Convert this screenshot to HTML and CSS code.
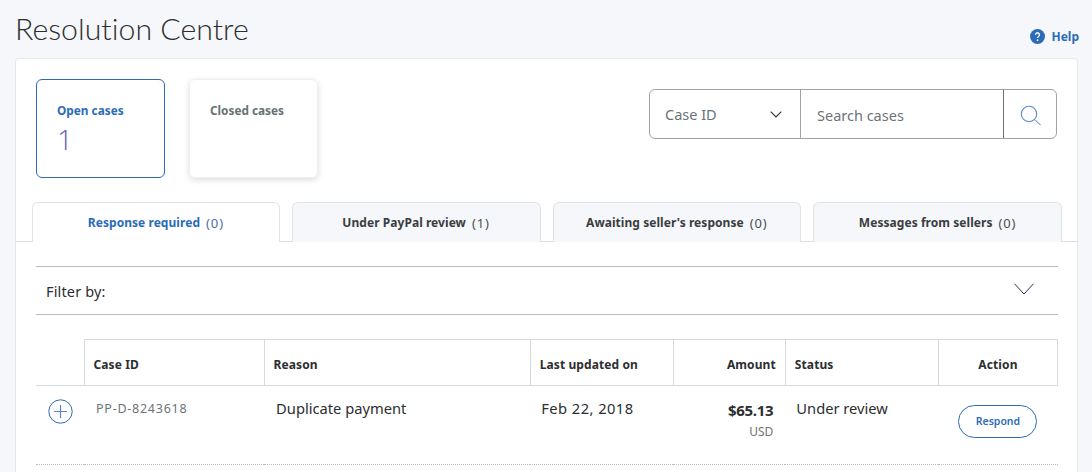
FILE: index.html
```html
<!DOCTYPE html>
<html lang="en">
<head>
<meta charset="utf-8">
<title>Resolution Centre</title>
<link rel="stylesheet" href="styles.css">
</head>
<body>
<div class="page">
  <header class="page-head">
    <h1 class="title">Resolution Centre</h1>
    <a class="help" href="#">
      <svg class="help-icon" width="15" height="15" viewBox="0 0 16 16" aria-hidden="true"><circle cx="8" cy="8" r="8" fill="#2c6bb8"/><path d="M5.9 6.2a2.1 2.1 0 1 1 3.2 1.8c-.7.4-1.1.8-1.1 1.6" fill="none" stroke="#fff" stroke-width="1.5"/><circle cx="8" cy="11.9" r=".95" fill="#fff"/></svg>
      <span>Help</span>
    </a>
  </header>
  <main class="panel">
    <section class="top">
      <div class="cards">
        <div class="card card-active">
          <div class="card-label">Open cases</div>
          <div class="card-count">1</div>
        </div>
        <div class="card">
          <div class="card-label">Closed cases</div>
        </div>
      </div>
      <div class="search">
        <div class="search-type">
          <span>Case ID</span>
          <svg width="12" height="7" viewBox="0 0 12 7" aria-hidden="true"><path d="M.7.7 6 6l5.3-5.3" fill="none" stroke="#2c2e2f" stroke-width="1.1"/></svg>
        </div>
        <div class="search-input">Search cases</div>
        <div class="search-btn">
          <svg width="24" height="24" viewBox="0 0 24 24" aria-hidden="true"><circle cx="10" cy="10" r="7.7" fill="none" stroke="#5b86cc" stroke-width="1.1"/><path d="m15.6 15.6 6 5.6" fill="none" stroke="#7f9fce" stroke-width="1.1"/></svg>
        </div>
      </div>
    </section>
    <nav class="tabs">
      <div class="tab tab-active"><b>Response required</b><span class="num">(0)</span></div>
      <div class="tab"><b>Under PayPal review</b><span class="num">(1)</span></div>
      <div class="tab"><b>Awaiting seller's response</b><span class="num">(0)</span></div>
      <div class="tab"><b>Messages from sellers</b><span class="num">(0)</span></div>
    </nav>
    <section class="body">
      <div class="filter">
        <span>Filter by:</span>
        <svg width="20" height="12" viewBox="0 0 20 12" aria-hidden="true"><path d="M.4.7 10 11 19.6.7" fill="none" stroke="#2a2a50" stroke-width="1"/></svg>
      </div>
      <table class="cases">
        <colgroup>
          <col class="c0"><col class="c1"><col class="c2"><col class="c3"><col class="c4"><col class="c5"><col class="c6">
        </colgroup>
        <thead>
          <tr>
            <th class="blank"></th>
            <th>Case ID</th>
            <th>Reason</th>
            <th>Last updated on</th>
            <th class="right">Amount</th>
            <th>Status</th>
            <th class="center">Action</th>
          </tr>
        </thead>
        <tbody>
          <tr>
            <td class="expand">
              <svg width="25" height="25" viewBox="0 0 25 25" aria-hidden="true"><circle cx="12.5" cy="12.5" r="11.7" fill="none" stroke="#2c6bb8" stroke-width="1"/><path d="M12.5 6v13M6 12.5h13" fill="none" stroke="#5b86cc" stroke-width="1.2"/></svg>
            </td>
            <td class="case-id">PP-D-8243618</td>
            <td class="text reason">Duplicate payment</td>
            <td class="text date">Feb 22, 2018</td>
            <td class="amount"><div class="value">$65.13</div><div class="cur">USD</div></td>
            <td class="text">Under review</td>
            <td class="action"><a class="respond" href="#">Respond</a></td>
          </tr>
        </tbody>
      </table>
    </section>
  </main>
</div>
</body>
</html>
```
FILE: styles.css
```css
* { box-sizing: border-box; }
html, body { margin: 0; height: 100%; overflow: hidden; }
body {
  background: #f5f7fa;
  color: #2c2e2f;
  font-family: "Noto Sans", "Open Sans", sans-serif;
}
.page { padding: 0 14px 0 15px; }
.page-head {
  height: 58px;
  display: flex;
  justify-content: space-between;
}
.title {
  margin: 9px 0 0 0;
  font-family: Lato, sans-serif;
  font-weight: 300;
  font-size: 30.3px;
  line-height: 38px;
  font-variant-ligatures: none;
  color: #2c2e2f;
}
.help {
  display: flex;
  align-items: center;
  gap: 6px;
  height: 16px;
  margin: 28px -1px 0 0;
  color: #2c6bb8;
  font-size: 12px;
  font-weight: 700;
  text-decoration: none;
}
.panel {
  background: #fff;
  border: 1px solid #e5e8ee;
  border-radius: 4px 4px 0 0;
  height: 420px;
}
.top {
  display: flex;
  justify-content: space-between;
  padding: 20px 20px 0 20px;
  height: 143px;
}
.cards { display: flex; gap: 24px; }
.card {
  width: 129px;
  height: 99px;
  border: 1px solid #eef0f3;
  border-radius: 6px;
  padding: 22px 19px 0 20px;
  box-shadow: 0 2px 6px rgba(0,0,0,.14);
  color: #687173;
}
.card-active {
  border-color: #2c6bb8;
  color: #2c6bb8;
  box-shadow: none;
}
.card-label { font-size: 11.8px; font-weight: 700; line-height: 16px; }
.card-count {
  font-family: "Open Sans", sans-serif;
  font-weight: 300;
  font-size: 28px;
  line-height: 34px;
  margin-top: 4px;
  color: #5f5fb8;
}
.search {
  margin-top: 10px;
  width: 408px;
  height: 50px;
  border: 1px solid #9da3a6;
  border-radius: 6px;
  display: flex;
  color: #6c7378;
  font-size: 14.5px;
}
.search-type {
  width: 151px;
  border-right: 1px solid #9da3a6;
  display: flex;
  align-items: center;
  justify-content: space-between;
  padding: 0 18px 0 15px;
}
.search-input {
  flex: 1;
  display: flex;
  align-items: center;
  padding: 2px 16px 0;
  border-right: 1px solid #6c7378;
}
.search-btn {
  width: 52px;
  display: flex;
  align-items: center;
  justify-content: center;
  padding: 4px 0 0 2px;
}
.tabs {
  display: flex;
  gap: 12px;
  padding-left: 16px;
  margin-right: 15px;
  height: 40px;
}
.tab {
  width: 249px;
  border: 1px solid #dfe3e8;
  border-bottom: 0;
  border-radius: 6px 6px 0 0;
  background: #f5f7fa;
  display: flex;
  align-items: center;
  justify-content: center;
  gap: 6px;
  font-size: 12px;
}
.tab b { font-weight: 700; color: #3a3d3f; letter-spacing: .05px; }
.tab .num { color: #4a4f52; font-size: 13px; letter-spacing: .9px; }
.tab-active { width: 248px; background: #fff; position: relative; z-index: 1; }
.tab-active b { color: #2c6bb8; }
.tab-active .num { color: #4c6fa8; }
.body {
  border-top: 1px solid #dcdfe4;
  margin-top: -1px;
  padding: 24px 19px 0 20px;
}
.filter {
  height: 49px;
  border-top: 1px solid #b9bdc0;
  border-bottom: 1px solid #b9bdc0;
  display: flex;
  align-items: center;
  justify-content: space-between;
  padding: 1px 24px 0 10px;
  font-size: 14.5px;
  letter-spacing: .15px;
  color: #2c2e2f;
}
.filter svg { margin-top: -5px; }
.cases {
  margin-top: 24px;
  width: 1022px;
  border-collapse: collapse;
  table-layout: fixed;
}
.c0 { width: 48px; }
.c1 { width: 180px; }
.c2 { width: 266px; }
.c3 { width: 143px; }
.c4 { width: 112px; }
.c5 { width: 153px; }
.c6 { width: 119px; }
.cases th {
  height: 46px;
  border: 1px solid #d5dadd;
  padding: 4px 9px 0;
  font-size: 12px;
  font-weight: 700;
  letter-spacing: .1px;
  text-align: left;
  color: #2c2e2f;
}
.cases th.blank { border-top: 0; border-left: 0; }
.cases th.right { text-align: right; }
.cases th.center { text-align: center; }
.cases td {
  height: 79px;
  border-bottom: 1px dotted #b9bdc0;
  vertical-align: top;
  padding: 12px 11px 0;
}
.cases td.text { font-size: 14.7px; line-height: 20px; }
.cases td.reason { padding-left: 12px; }
.cases td.date { letter-spacing: .45px; }
.cases td.expand { padding: 13px 0 0 11.5px; }
.expand svg { display: block; }
.cases td.case-id {
  font-size: 12.5px;
  line-height: 20px;
  letter-spacing: .75px;
  padding-left: 12px;
  padding-top: 13px;
  color: #6c7378;
  white-space: nowrap;
}
.cases td.amount { text-align: right; padding: 14px 12px 0 0; }
.value { font-size: 15px; font-weight: 700; line-height: 20px; letter-spacing: -.3px; }
.cur { font-size: 12px; line-height: 16px; margin-top: 4px; color: #6c7378; }
.cases td.action { text-align: center; padding: 19px 0 0; }
.respond {
  display: inline-block;
  width: 79px;
  height: 33px;
  line-height: 31px;
  border: 1px solid #2c6bb8;
  border-radius: 17px;
  font-size: 10.5px;
  font-weight: 600;
  color: #2c6bb8;
  text-decoration: none;
}
```
